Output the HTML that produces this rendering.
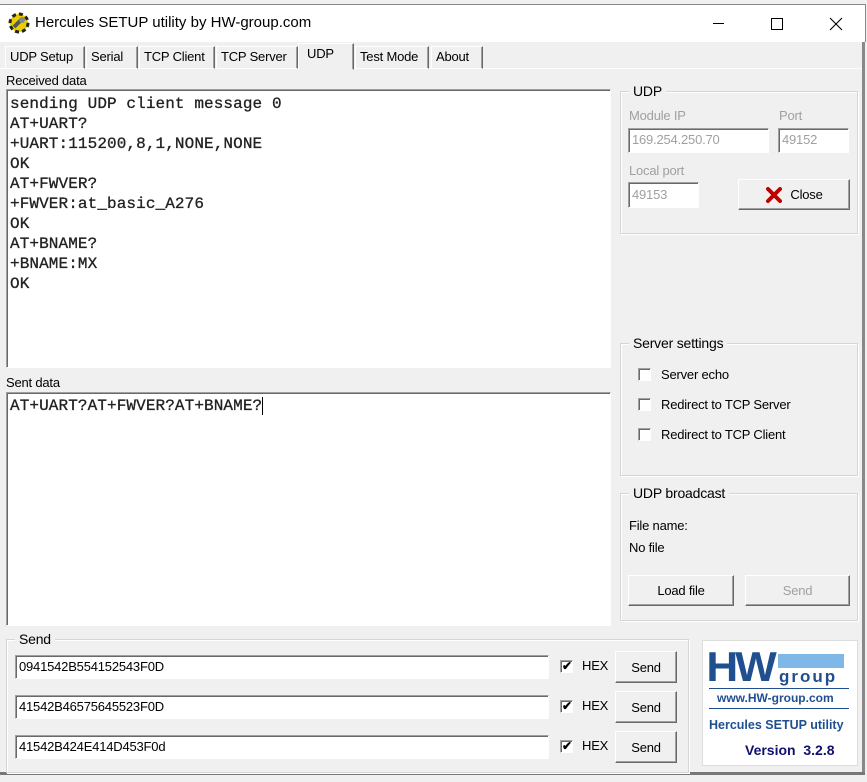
<!DOCTYPE html>
<html><head><meta charset="utf-8"><style>
*{box-sizing:border-box;margin:0;padding:0}
body{width:867px;height:782px;background:#f0f0f0;font-family:"Liberation Sans",sans-serif;font-size:13px;letter-spacing:-0.2px;color:#000;position:relative;overflow:hidden}
.a{position:absolute}
.t{position:absolute;white-space:nowrap}
.inp{position:absolute;background:#fff;border:1px solid;border-color:#a0a0a0 #fff #fff #a0a0a0;box-shadow:inset 1px 1px 0 #696969}
.grp{position:absolute;border:1px solid #d5d5d5;box-shadow:inset 1px 1px 0 #fff,1px 1px 0 #fff}
.gl{position:absolute;top:-9px;left:8px;background:#f0f0f0;padding:0 4px}
.btn{position:absolute;background:#f0f0f0;border:1px solid;border-color:#fff #696969 #696969 #fff;box-shadow:inset -1px -1px 0 #a0a0a0;display:flex;align-items:center;justify-content:center}
.cb{position:absolute;width:13px;height:13px;background:#fff;border:1px solid;border-color:#a0a0a0 #fff #fff #a0a0a0;box-shadow:inset 1px 1px 0 #696969}
.mono{font-family:"Liberation Mono",monospace;font-size:16px;line-height:20px;color:#222;letter-spacing:0.1px;-webkit-text-stroke:0.3px #222}
.tab{position:absolute;top:46px;height:23px;border:1px solid;border-color:#fff #696969 transparent #fff;padding:2px 4px 0 4px;box-shadow:inset -1px 0 0 #a0a0a0}
.gray{color:#a0a0a0}
.ck{font-size:12px;line-height:10px;padding-left:1px;font-weight:bold}
</style></head><body>
<div class="a" style="left:0;top:4px;width:866px;height:38px;background:#fff;border-top:1px solid #888;border-right:1px solid #888"></div>
<svg class="a" style="left:8px;top:12px" width="22" height="22" viewBox="0 0 22 22"><circle cx="11" cy="11" r="9" fill="#e8d000"/><circle cx="11" cy="11" r="9" fill="none" stroke="#222" stroke-width="3" stroke-dasharray="4 3"/><path d="M6 15l8-8" stroke="#555" stroke-width="4"/><circle cx="14" cy="8" r="3" fill="#888"/></svg>
<div class="t" style="left:35px;top:14px;font-size:15px;letter-spacing:0">Hercules SETUP utility by HW-group.com</div>
<div class="a" style="left:713px;top:23px;width:11px;height:1px;background:#000"></div>
<div class="a" style="left:771px;top:18px;width:12px;height:12px;border:1px solid #000"></div>
<svg class="a" style="left:829px;top:17px" width="14" height="14"><path d="M1 1L13 13M13 1L1 13" stroke="#000" stroke-width="1.1"/></svg>
<div class="a" style="left:862px;top:42px;width:3px;height:732px;background:#888"></div>
<div class="a" style="left:0;top:772px;width:865px;height:3px;background:#777"></div>
<div class="a" style="left:0;top:68px;width:862px;height:1px;background:#fff"></div>
<div class="tab" style="left:5px;width:80px">UDP Setup</div>
<div class="tab" style="left:86px;width:52px">Serial</div>
<div class="tab" style="left:139px;width:76px">TCP Client</div>
<div class="tab" style="left:216px;width:82px">TCP Server</div>
<div class="tab" style="left:298px;top:43px;height:27px;width:56px;background:#f0f0f0;padding-left:8px">UDP</div>
<div class="tab" style="left:355px;width:74px">Test Mode</div>
<div class="tab" style="left:431px;width:52px">About</div>
<div class="t" style="left:6px;top:73px">Received data</div>
<div class="inp mono" style="left:6px;top:89px;width:605px;height:279px;padding:4px 0 0 3px">sending UDP client message 0<br>AT+UART?<br>+UART:115200,8,1,NONE,NONE<br>OK<br>AT+FWVER?<br>+FWVER:at_basic_A276<br>OK<br>AT+BNAME?<br>+BNAME:MX<br>OK</div>
<div class="t" style="left:6px;top:375px">Sent data</div>
<div class="inp mono" style="left:6px;top:392px;width:605px;height:234px;padding:3px 0 0 3px">AT+UART?AT+FWVER?AT+BNAME?<span style="border-left:1px solid #000"></span></div>
<div class="grp" style="left:620px;top:91px;width:238px;height:143px"><div class="gl" style="font-size:14px">UDP</div></div>
<div class="t gray" style="left:629px;top:108px">Module IP</div>
<div class="t gray" style="left:779px;top:108px">Port</div>
<div class="inp gray" style="left:628px;top:128px;width:141px;height:25px;padding:3px 3px">169.254.250.70</div>
<div class="inp gray" style="left:778px;top:128px;width:71px;height:25px;padding:3px 3px">49152</div>
<div class="t gray" style="left:629px;top:163px">Local port</div>
<div class="inp gray" style="left:628px;top:182px;width:71px;height:26px;padding:4px 3px">49153</div>
<div class="btn" style="left:738px;top:179px;width:112px;height:31px"><svg width="18" height="16" style="margin-right:7px"><path d="M3 2L15 14M15 2L3 14" stroke="#c00000" stroke-width="4" stroke-linecap="round"/></svg>Close</div>
<div class="grp" style="left:620px;top:343px;width:238px;height:133px"><div class="gl" style="font-size:14px">Server settings</div></div>
<div class="cb" style="left:638px;top:368px"></div><div class="t" style="left:661px;top:367px">Server echo</div>
<div class="cb" style="left:638px;top:398px"></div><div class="t" style="left:661px;top:397px">Redirect to TCP Server</div>
<div class="cb" style="left:638px;top:428px"></div><div class="t" style="left:661px;top:427px">Redirect to TCP Client</div>
<div class="grp" style="left:620px;top:493px;width:238px;height:128px"><div class="gl" style="font-size:14px">UDP broadcast</div></div>
<div class="t" style="left:629px;top:518px">File name:</div>
<div class="t" style="left:629px;top:540px">No file</div>
<div class="btn" style="left:628px;top:575px;width:106px;height:31px">Load file</div>
<div class="btn gray" style="left:745px;top:575px;width:105px;height:31px">Send</div>
<div class="grp" style="left:6px;top:639px;width:683px;height:134px"><div class="gl" style="font-size:14px">Send</div></div>
<div class="inp" style="left:15px;top:655px;width:534px;height:24px;padding:3px 3px;font-size:13px">0941542B554152543F0D</div>
<div class="inp" style="left:15px;top:695px;width:534px;height:24px;padding:3px 3px;font-size:13px">41542B46575645523F0D</div>
<div class="inp" style="left:15px;top:735px;width:534px;height:24px;padding:3px 3px;font-size:13px">41542B424E414D453F0d</div>
<div class="cb ck" style="left:560px;top:660px">✔</div><div class="t" style="left:582px;top:658px">HEX</div>
<div class="cb ck" style="left:560px;top:700px">✔</div><div class="t" style="left:582px;top:698px">HEX</div>
<div class="cb ck" style="left:560px;top:740px">✔</div><div class="t" style="left:582px;top:738px">HEX</div>
<div class="btn" style="left:615px;top:651px;width:62px;height:32px">Send</div>
<div class="btn" style="left:615px;top:691px;width:62px;height:32px">Send</div>
<div class="btn" style="left:615px;top:731px;width:62px;height:32px">Send</div>
<div class="a" style="left:702px;top:640px;width:156px;height:126px;background:#fff;border:1px solid #ddd"></div>
<div class="t" style="left:708px;top:646px;font-size:42px;font-weight:bold;color:#1f4f8f;letter-spacing:-3px;line-height:42px;transform:scaleX(1.05)">HW</div>
<div class="a" style="left:778px;top:654px;width:66px;height:14px;background:#7fb8e6"></div>
<div class="t" style="left:779px;top:667px;font-size:17px;font-weight:bold;color:#1f4f8f;letter-spacing:2px">group</div>
<div class="a" style="left:709px;top:688px;width:140px;height:1px;background:#1f4f8f"></div>
<div class="t" style="left:717px;top:691px;font-size:12px;font-weight:bold;color:#1f4f8f;letter-spacing:0">www.HW-group.com</div>
<div class="a" style="left:709px;top:708px;width:140px;height:1px;background:#1f4f8f"></div>
<div class="t" style="left:709px;top:718px;font-size:12.5px;font-weight:bold;color:#1f4f8f;letter-spacing:0">Hercules SETUP utility</div>
<div class="t" style="left:745px;top:742px;font-size:14px;font-weight:bold;color:#101070;letter-spacing:0">Version&nbsp; 3.2.8</div>
</body></html>
